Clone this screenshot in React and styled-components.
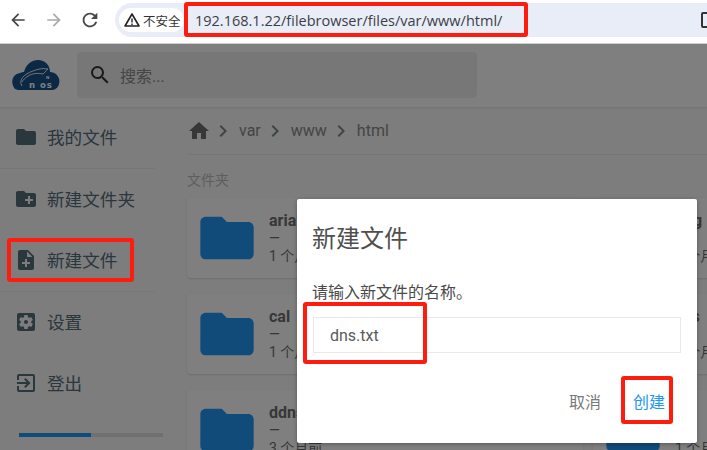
import React from 'react';
import styled, { createGlobalStyle } from 'styled-components';
import {
	MdArrowBack, MdArrowForward, MdRefresh, MdFolder, MdCreateNewFolder, MdNoteAdd,
	MdSettingsApplications, MdExitToApp, MdHome, MdChevronRight, MdSearch,
} from 'react-icons/md';

const GlobalStyle = createGlobalStyle`
	html, body {
		margin: 0;
		padding: 0;
		overflow: hidden;
		background: #fff;
		font-family: Roboto, "Noto Sans CJK SC", sans-serif;
	}
`;

const Screen = styled.div`
	position: relative;
	width: 707px;
	height: 450px;
	overflow: hidden;
`;

const BrowserBar = styled.div`
	height: 44px;
	box-sizing: border-box;
	padding: 3px 0 6px 0;
	display: flex;
	align-items: stretch;
	background: #fff;
	border-bottom: 1px solid #d0d0d0;
`;

const NavButton = styled.div`
	width: 36px;
	display: flex;
	align-items: center;
	justify-content: center;
	color: ${props => props.$off ? '#a9a9a9' : '#474747'};
	margin-top: -1px;
`;

const AddressPill = styled.div`
	flex: 1;
	margin-left: 7px;
	display: flex;
	align-items: center;
	padding-left: 4px;
	background: #e9edf7;
	border-radius: 17px 0 0 17px;
	position: relative;
`;

const SecurityChip = styled.div`
	height: 24px;
	width: 65px;
	flex: none;
	display: flex;
	align-items: center;
	gap: 3px;
	padding-left: 5px;
	box-sizing: border-box;
	background: #fff;
	border-radius: 12px;
	color: #333;
	font-size: 12.5px;
	white-space: nowrap;
	font-family: "Noto Sans CJK SC", sans-serif;
`;

const UrlText = styled.div`
	margin-left: 11px;
	font-family: "Open Sans", sans-serif;
	font-size: 14.5px;
	color: #3c4043;
	white-space: nowrap;
`;

const EdgeIcon = styled.div`
	position: absolute;
	right: -8px;
	top: 9px;
	width: 10px;
	height: 12px;
	border: 2px solid #333;
	border-radius: 2px;
`;

const Page = styled.div`
	position: relative;
	height: 406px;
	background: #fafafa;
`;

const Header = styled.header`
	height: 63px;
	box-sizing: border-box;
	padding: 8px 0 9px 12px;
	display: flex;
	align-items: stretch;
	gap: 17px;
	background: #fff;
	box-shadow: 0 1px 2px rgba(0, 0, 0, 0.1);
`;

const Logo = styled.svg`
	width: 48px;
	height: 46px;
	flex: none;
`;

const SearchBox = styled.div`
	width: 400px;
	display: flex;
	align-items: center;
	gap: 8px;
	padding-left: 11px;
	box-sizing: border-box;
	border-radius: 4px;
	background: #eeeeee;
	color: #333;
	font-size: 16px;
`;

const Placeholder = styled.span`
	color: #8a8a8a;
`;

const Body = styled.div`
	display: flex;
`;

const Sidebar = styled.nav`
	width: 155px;
	flex: none;
`;

const NavGroup = styled.div`
	border-bottom: ${props => props.$last ? 'none' : '1px solid rgba(0, 0, 0, 0.05)'};
`;

const NavItem = styled.div`
	height: 61px;
	box-sizing: border-box;
	padding: 0 0 2px 14px;
	display: flex;
	align-items: center;
	gap: 9px;
	color: #546e7a;
	font-size: 17.6px;
	white-space: nowrap;
`;

const Progress = styled.div`
	width: 144px;
	height: 4px;
	margin: 19px 0 0 19px;
	background: #e0e0e0;
`;

const ProgressFill = styled.div`
	height: 100%;
	background: #2196f3;
`;

const Main = styled.main`
	flex: 1;
	min-width: 0;
	padding-left: 32px;
`;

const Breadcrumbs = styled.div`
	height: 47px;
	display: flex;
	align-items: center;
	border-bottom: 1px solid rgba(0, 0, 0, 0.05);
	color: #8a8a8a;
	font-size: 16px;
	margin-bottom: 15px;
`;

const Crumb = styled.span`
	padding: 0 2px 0 4px;
`;

const SectionLabel = styled.div`
	font-size: 14px;
	line-height: 20px;
	color: #bdbdbd;
	margin-bottom: 8px;
`;

const CardGrid = styled.div`
	display: grid;
	grid-template-columns: 396px 396px;
	gap: 16px 10px;
`;

const Card = styled.div`
	height: 80px;
	display: flex;
	align-items: center;
	gap: 10px;
	padding-left: 8px;
	box-sizing: border-box;
	background: #fff;
	border-radius: 4px;
	box-shadow: 0 1px 2px rgba(0, 0, 0, 0.12);
	color: #6f6f6f;
`;

const FolderIcon = styled(MdFolder)`
	color: #2196f3;
	flex: none;
`;

const CardText = styled.div`
	display: flex;
	flex-direction: column;
`;

const CardName = styled.div`
	font-size: 16px;
	font-weight: 700;
	line-height: 17px;
`;

const CardMeta = styled.div`
	font-size: 14px;
	line-height: 18px;
	white-space: nowrap;
`;

const Overlay = styled.div`
	position: absolute;
	inset: 0;
	background: rgba(0, 0, 0, 0.5);
`;

const Dialog = styled.div`
	position: absolute;
	left: 297px;
	top: 199px;
	width: 400px;
	height: 244px;
	box-sizing: border-box;
	padding: 22px 16px 0 16px;
	background: #fff;
	border-radius: 2px;
	box-shadow: 0 1px 4px rgba(0, 0, 0, 0.3);
	display: flex;
	flex-direction: column;
`;

const DialogTitle = styled.h2`
	margin: 0 0 24px -1px;
	font-size: 24px;
	font-weight: 400;
	line-height: 36px;
	color: #4f4f4f;
`;

const DialogText = styled.p`
	margin: 0 0 12px -1px;
	font-size: 16px;
	line-height: 24px;
	color: #4a4a4a;
`;

const NameInput = styled.div`
	height: 36px;
	box-sizing: border-box;
	padding-left: 16px;
	display: flex;
	align-items: center;
	border: 1px solid #e8e8e8;
	font-size: 16px;
	color: #5a5a5a;
`;

const DialogActions = styled.div`
	margin-top: 38px;
	padding-right: 16px;
	display: flex;
	justify-content: flex-end;
	gap: 32px;
`;

const ActionButton = styled.div`
	font-size: 16px;
	line-height: 24px;
	color: ${props => props.$primary ? '#2196f3' : '#7a7a7a'};
`;

const Mark = styled.div`
	position: absolute;
	left: ${props => props.$x}px;
	top: ${props => props.$y}px;
	width: ${props => props.$w}px;
	height: ${props => props.$h}px;
	box-sizing: border-box;
	border: 4px solid #fe1c0f;
	border-radius: 3px;
`;

const folders = [
	{ name: 'aria2', date: '1 个月前' },
	{ name: 'img', date: '1 个月前' },
	{ name: 'cal', date: '1 个月前' },
	{ name: 'css', date: '1 个月前' },
	{ name: 'ddns', date: '3 个月前' },
	{ name: 'ss', date: '1 个月前' },
];

function App() {
	return (
		<Screen>
			<GlobalStyle />
			<BrowserBar>
				<NavButton><MdArrowBack size={20} /></NavButton>
				<NavButton $off><MdArrowForward size={20} /></NavButton>
				<NavButton><MdRefresh size={22} /></NavButton>
				<AddressPill>
					<SecurityChip>
						<svg width="16" height="16" viewBox="0 0 16 16">
							<path d="M8 2 L15 14 H1 Z" fill="none" stroke="#222" strokeWidth="1.6" strokeLinejoin="round" />
							<path d="M8 6.5 V10.5 M8 11.5 V13" stroke="#222" strokeWidth="1.4" />
						</svg>
						不安全
					</SecurityChip>
					<UrlText>192.168.1.22/filebrowser/files/var/www/html/</UrlText>
					<EdgeIcon />
				</AddressPill>
			</BrowserBar>
			<Page>
				<Header>
					<Logo viewBox="0 0 48 46">
						<path d="M3 37 C-2 31 0 22 8 21 C10 20 11 20 12 20 C14 12 20 8 26 8 C33 8 38 13 38 20 C44 20 49 26 47 32 C46 36 43 38 39 38 L9 38 C7 38 5 38 3 37 Z" fill="#16508a" />
						<path d="M10 34 C6 28 12 22 21 19 C26 17 30 16 36 17 C33 19 33 21 31 22 C26 21 21 21 16 24 C13 26 11 28 10 30" fill="none" stroke="#ffffff" strokeWidth="0.9" />
						<text x="34" y="27" fontSize="4" fontFamily="DejaVu Sans" fontWeight="700" fill="#ffffff">N</text>
						<text x="17" y="36" fontSize="8.5" fontFamily="DejaVu Sans" fontWeight="700" fill="#ffffff" letterSpacing="1">n os</text>
					</Logo>
					<SearchBox>
						<MdSearch size={24} />
						<Placeholder>搜索...</Placeholder>
					</SearchBox>
				</Header>
				<Body>
					<Sidebar>
						<NavGroup>
							<NavItem><MdFolder size={24} />我的文件</NavItem>
						</NavGroup>
						<NavGroup>
							<NavItem><MdCreateNewFolder size={24} />新建文件夹</NavItem>
							<NavItem><MdNoteAdd size={24} />新建文件</NavItem>
						</NavGroup>
						<NavGroup $last>
							<NavItem><MdSettingsApplications size={24} />设置</NavItem>
							<NavItem><MdExitToApp size={24} />登出</NavItem>
						</NavGroup>
						<Progress><ProgressFill style={{ width: '50%' }} /></Progress>
					</Sidebar>
					<Main>
						<Breadcrumbs>
							<MdHome size={24} color="#6f6f6f" />
							<MdChevronRight size={24} color="#7a8a92" />
							<Crumb>var</Crumb>
							<MdChevronRight size={24} color="#7a8a92" />
							<Crumb>www</Crumb>
							<MdChevronRight size={24} color="#7a8a92" />
							<Crumb>html</Crumb>
						</Breadcrumbs>
						<SectionLabel>文件夹</SectionLabel>
						<CardGrid>
							{folders.map(f => (
								<Card key={f.name}>
									<FolderIcon size={64} />
									<CardText>
										<CardName>{f.name}</CardName>
										<CardMeta>—</CardMeta>
										<CardMeta>{f.date}</CardMeta>
									</CardText>
								</Card>
							))}
						</CardGrid>
					</Main>
				</Body>
				<Overlay />
			</Page>
			<Dialog>
				<DialogTitle>新建文件</DialogTitle>
				<DialogText>请输入新文件的名称。</DialogText>
				<NameInput>dns.txt</NameInput>
				<DialogActions>
					<ActionButton>取消</ActionButton>
					<ActionButton $primary>创建</ActionButton>
				</DialogActions>
			</Dialog>
			<Mark $x={184} $y={2} $w={344} $h={35} />
			<Mark $x={7} $y={238} $w={127} $h={44} />
			<Mark $x={303} $y={302} $w={124} $h={62} />
			<Mark $x={621} $y={376} $w={52} $h={48} />
		</Screen>
	);
}

export default App;
